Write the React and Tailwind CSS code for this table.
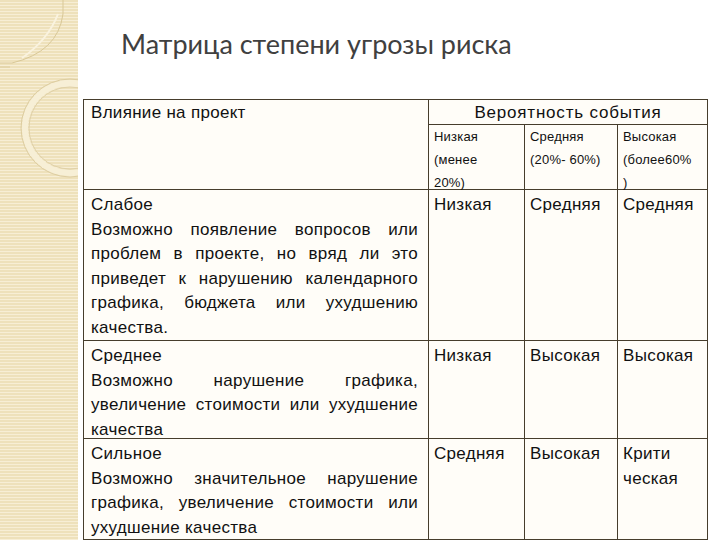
import React from "react";

const rows = [
  {
    h: "Слабое",
    lines: [
      "Возможно появление вопросов или",
      "проблем в проекте, но вряд ли это",
      "приведет к нарушению календарного",
      "графика, бюджета или ухудшению",
      "качества.",
    ],
    cells: [["Низкая"], ["Средняя"], ["Средняя"]],
  },
  {
    h: "Среднее",
    lines: ["Возможно нарушение графика,", "увеличение стоимости или ухудшение", "качества"],
    cells: [["Низкая"], ["Высокая"], ["Высокая"]],
  },
  {
    h: "Сильное",
    lines: ["Возможно значительное нарушение", "графика, увеличение стоимости или", "ухудшение качества"],
    cells: [["Средняя"], ["Высокая"], ["Крити", "ческая"]],
  },
];

function Strip() {
  return (
    <div className="relative w-[78px] h-full shrink-0 bg-[repeating-linear-gradient(180deg,#eee1bb_0px,#eee1bb_2px,#f7eed5_2px,#f7eed5_3px)]">
      <svg width="78" height="540" className="absolute inset-0">
        <path d="M63 0 L63 14 Q58 52 12 63" fill="none" stroke="#d9c897" strokeWidth="1" />
        <path d="M58 14 Q48 40 22 58" fill="none" stroke="#faf3df" strokeWidth="2" />
        <path d="M0 63 L12 63 M0 67 L10 67" stroke="#dccb9c" strokeWidth="1" />
        <circle cx="70" cy="128" r="45" fill="none" stroke="#f7efd6" strokeWidth="6" />
        <circle cx="70" cy="128" r="49" fill="none" stroke="#ddcda0" strokeWidth="1" />
        <circle cx="70" cy="128" r="41" fill="none" stroke="#e0d1a8" strokeWidth="1" />
      </svg>
    </div>
  );
}

export default function App() {
  return (
    <div className="w-[720px] h-[540px] flex bg-white overflow-hidden font-['Liberation_Sans',Arial,sans-serif] text-[#111]">
      <Strip />
      <div className="flex flex-col">
        <h1 className="mt-[26px] ml-[43px] h-[73px] text-[27px] leading-[36px] text-[#404040] font-['Lato','Liberation_Sans',sans-serif]">
          Матрица степени угрозы риска
        </h1>
        <div className="ml-[5px] grid grid-cols-[344px_95px_92px_89px] grid-rows-[24px_64px_150px_97px_100px] gap-px p-px bg-[#463d2c] text-[17px] tracking-[0.3px]">
          <div className="row-span-2 bg-[#fffdf8] pl-[7px] pt-[1px] leading-[24px]">Влияние на проект</div>
          <div className="col-span-3 bg-[#fffdf8] text-center leading-[24px] pt-[1px] tracking-[0.8px]">Вероятность события</div>
          <div className="bg-[#fffdf8] pl-[5px] text-[13px] tracking-[0.2px] leading-[23px]">Низкая<br />(менее<br />20%)</div>
          <div className="bg-[#fffdf8] pl-[5px] text-[13px] tracking-[0.2px] leading-[23px]">Средняя<br />(20%- 60%)</div>
          <div className="bg-[#fffdf8] pl-[5px] text-[13px] tracking-[0.2px] leading-[23px]">Высокая<br />(более60%<br />)</div>
          {rows.map((r) => (
            <React.Fragment key={r.h}>
              <div className="bg-[#fffdf8] pl-[7px] pr-[10px] pt-[3px] leading-[24.5px]">
                <div>{r.h}</div>
                {r.lines.map((l, i) => (
                  <div
                    key={i}
                    className={i < r.lines.length - 1 ? "whitespace-nowrap text-justify [text-align-last:justify]" : "whitespace-nowrap"}
                  >
                    {l}
                  </div>
                ))}
              </div>
              {r.cells.map((c, i) => (
                <div key={i} className="bg-[#fffdf8] pl-[5px] pt-[3px] leading-[24.5px]">
                  {c.map((t) => (
                    <div key={t}>{t}</div>
                  ))}
                </div>
              ))}
            </React.Fragment>
          ))}
        </div>
      </div>
    </div>
  );
}
